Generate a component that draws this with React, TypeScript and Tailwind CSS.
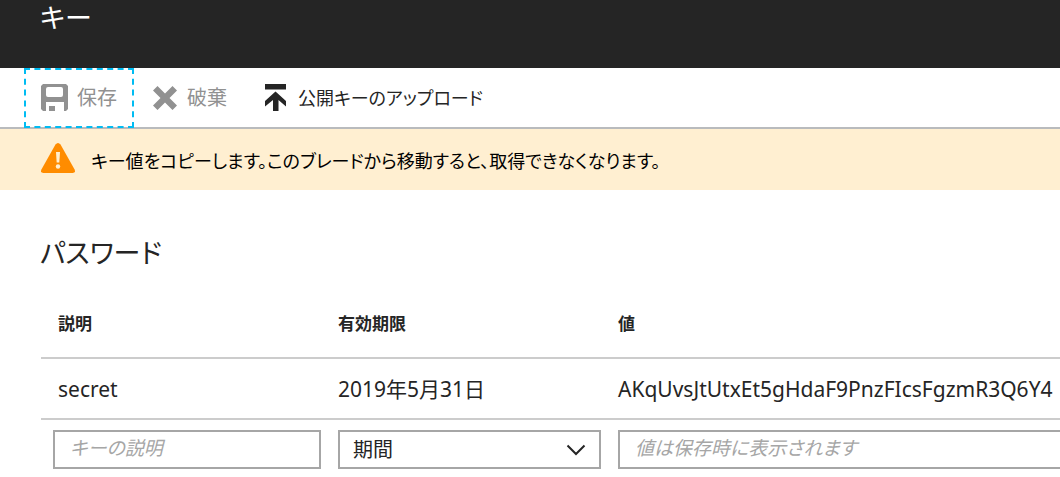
import { useState } from 'react'

function SaveIcon() {
  return (
    <svg className="h-7 w-7 shrink-0" viewBox="0 0 28 28" fill="currentColor" aria-hidden="true">
      <path fillRule="evenodd" d="M2 0h23l2 2v23l-2 2h-2v-9H5v9H2l-2-2V2zM7 3q-2 0-2 2v6q0 2 2 2h13q2 0 2-2V5q0-2-2-2z" />
      <path d="M8 22h6v5H8z" />
    </svg>
  )
}

function DiscardIcon() {
  return (
    <svg className="h-6 w-6 shrink-0" viewBox="0 0 24 24" fill="currentColor" aria-hidden="true">
      <path d="M4.500 0 12 7.500 19.500 0 24 4.500 16.500 12l7.500 7.500-4.500 4.500L12 16.500 4.500 24 0 19.500 7.500 12 0 4.500z" />
    </svg>
  )
}

function UploadIcon() {
  return (
    <svg className="h-7 w-[21px] shrink-0" viewBox="0 0 21 28" fill="currentColor" aria-hidden="true">
      <path d="M0 0h21v5.500H0z" />
      <path d="M10.500 7.500 21 17v5.500l-7.500-6.500V27H8V16l-8 6.500V17z" />
    </svg>
  )
}

function WarningIcon() {
  return (
    <svg className="h-[31px] w-[34px] shrink-0" viewBox="0 0 34 31" aria-hidden="true">
      <path fill="#ff8c00" d="M14.500 1.500Q17-1.500 19.500 1.500L33.600 26.500Q35 30 31.500 30H2.500Q-1 30 .4 26.500z" />
      <path fill="#ffefd1" d="M15 9h4l-.7 10.500h-2.600z" />
      <circle fill="#ffefd1" cx="17" cy="23.500" r="2.200" />
    </svg>
  )
}

export default function App() {
  const [description, setDescription] = useState('')
  const [duration, setDuration] = useState('')

  return (
    <div className="overflow-hidden bg-white font-['Noto_Sans','Noto_Sans_CJK_JP',sans-serif] text-[20px] leading-6 text-[#252525] [font-feature-settings:'palt']">
      <header className="bg-[#252525] px-10 pb-8 text-white">
        <h1 className="text-[27px] leading-9">キー</h1>
      </header>

      <div className="flex h-[61px] border-b-2 border-[#b9bbbd] pl-6">
        <button type="button" className="flex h-[60px] items-center gap-2 border-2 border-dashed border-[#00bcf2] px-[15px] text-[#919191]">
          <SaveIcon />
          保存
        </button>
        <button type="button" className="flex h-[60px] items-center gap-2.5 px-[19px] text-[#919191]">
          <DiscardIcon />
          破棄
        </button>
        <button type="button" className="flex h-[60px] items-center gap-3 px-[19px] text-[18px]">
          <UploadIcon />
          公開キーのアップロード
        </button>
      </div>

      <div className="flex h-[61px] items-start gap-4 bg-[#ffefd1] px-[41px] pt-3.5 text-[18px] text-black" role="alert">
        <WarningIcon />
        <p className="pt-1.5">キー値をコピーします。このブレードから移動すると、取得できなくなります。</p>
      </div>

      <section className="pt-[45px] pl-10">
        <h2 className="text-[27px] leading-9">パスワード</h2>
        <table className="mt-[19px] ml-px w-full min-w-[1160px] table-fixed text-left">
          <colgroup>
            <col className="w-[280px]" />
            <col className="w-[280px]" />
            <col />
          </colgroup>
          <thead>
            <tr className="h-[68px] border-b-2 border-[#cccccc] text-[17px]">
              <th className="pl-[17px] font-bold">説明</th>
              <th className="pl-[17px] font-bold">有効期限</th>
              <th className="pl-[17px] font-bold">値</th>
            </tr>
          </thead>
          <tbody>
            <tr className="h-[61px] border-b-2 border-[#cccccc] text-[21px]">
              <td className="pl-[17px]">secret</td>
              <td className="pl-[17px]">2019年5月31日</td>
              <td className="pl-[17px]">AKqUvsJtUtxEt5gHdaF9PnzFIcsFgzmR3Q6Y4</td>
            </tr>
            <tr>
              <td className="pt-2.5 pl-3">
                <input
                  type="text"
                  aria-label="キーの説明"
                  placeholder="キーの説明"
                  value={description}
                  onChange={e => setDescription(e.target.value)}
                  className="block h-[39px] w-full border-2 border-[#a6a6a6] px-[15px] pb-1 text-[19px] placeholder:text-[#a6a6a6] placeholder:italic"
                />
              </td>
              <td className="pt-2.5 pl-[17px]">
                <div className="relative">
                  <select
                    aria-label="期間"
                    value={duration}
                    onChange={e => setDuration(e.target.value)}
                    className="block h-[39px] w-full appearance-none border-2 border-[#a6a6a6] bg-white px-[13px]"
                  >
                    <option value="">期間</option>
                  </select>
                  <svg className="pointer-events-none absolute top-3.5 right-[15px] h-3 w-5" viewBox="0 0 20 12" fill="none" stroke="currentColor" strokeWidth="2" aria-hidden="true">
                    <path d="m1.500 1.500 8.500 8.500 8.500-8.500" />
                  </svg>
                </div>
              </td>
              <td className="pt-2.5 pl-[17px]">
                <input
                  type="text"
                  readOnly
                  aria-label="値"
                  placeholder="値は保存時に表示されます"
                  className="block h-[39px] w-full border-2 border-[#a6a6a6] px-[15px] pb-1 text-[19px] placeholder:text-[#a6a6a6] placeholder:italic"
                />
              </td>
            </tr>
          </tbody>
        </table>
      </section>
    </div>
  )
}
